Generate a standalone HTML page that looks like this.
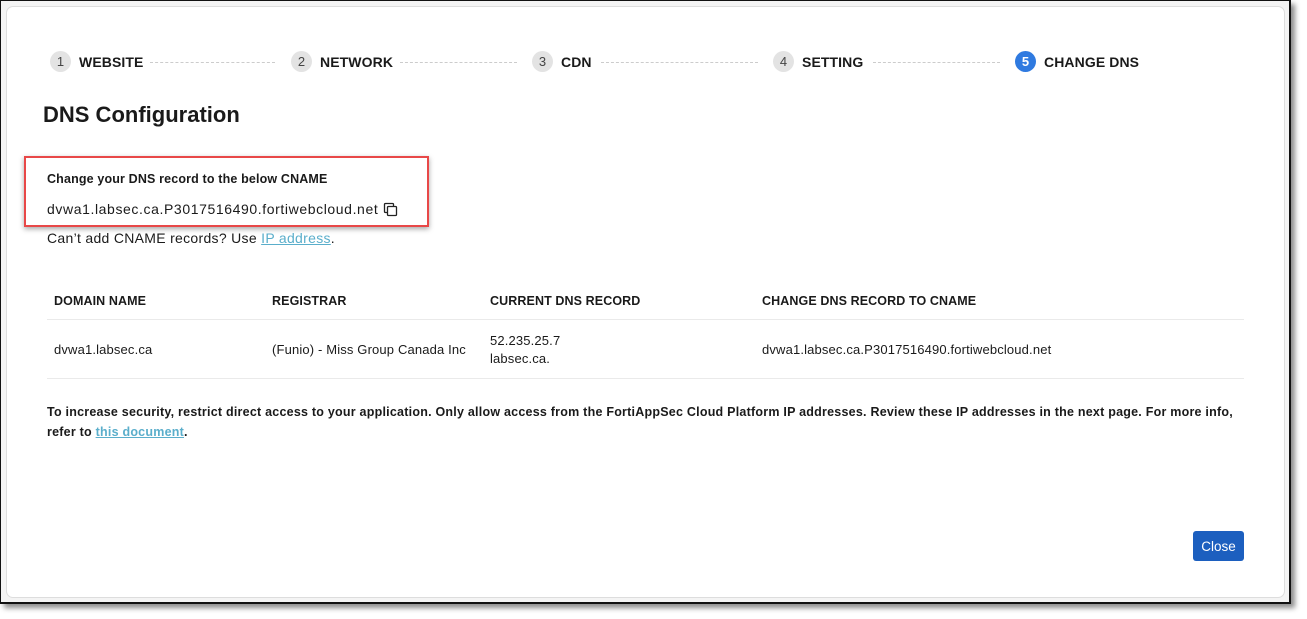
<!DOCTYPE html>
<html><head><style>
*{margin:0;padding:0;box-sizing:border-box}
body{width:1307px;height:619px;background:#fff;position:relative;overflow:hidden;font-family:"Liberation Sans",sans-serif;color:#1a1a1a}
.frame{position:absolute;left:0;top:0;width:1291px;height:604px;border:1px solid #111;border-right:2px solid #111;border-bottom:2px solid #111;box-shadow:4px 4px 5px rgba(0,0,0,.45);background:#f4f4f4}
.card{position:absolute;left:6px;top:6px;width:1279px;height:592px;background:#fff;border:1px solid #ddd;border-radius:7px}
.abs{position:absolute;white-space:nowrap}
.step{position:absolute;top:51px;display:flex;align-items:center;font-weight:bold;font-size:14px;letter-spacing:.1px}
.num{width:21px;height:21px;border-radius:50%;background:#e3e3e3;color:#444;font-size:13px;font-weight:normal;display:flex;align-items:center;justify-content:center;margin-right:8px}
.num.a{background:#2f7ae0;color:#fff;font-weight:bold}
.dash{position:absolute;top:62px;border-top:1px dashed #ccc}
.th{position:absolute;top:294px;font-size:12.5px;font-weight:bold;letter-spacing:.1px}
.td{position:absolute;font-size:13px;letter-spacing:.15px}
.link{color:#5aaecb;text-decoration:underline}
</style></head><body>
<div class="frame"></div>
<div class="card"></div>
<div class="step" style="left:50px"><span class="num">1</span>WEBSITE</div>
<div class="dash" style="left:150px;width:125px"></div>
<div class="step" style="left:291px"><span class="num">2</span>NETWORK</div>
<div class="dash" style="left:400px;width:117px"></div>
<div class="step" style="left:532px"><span class="num">3</span>CDN</div>
<div class="dash" style="left:601px;width:157px"></div>
<div class="step" style="left:773px"><span class="num">4</span>SETTING</div>
<div class="dash" style="left:873px;width:127px"></div>
<div class="step" style="left:1015px"><span class="num a">5</span>CHANGE DNS</div>
<div class="abs" style="left:43px;top:102px;font-size:22px;font-weight:bold">DNS Configuration</div>
<div class="abs" style="left:24px;top:156px;width:405px;height:71px;border:2px solid #e84848;box-shadow:0 2px 5px rgba(0,0,0,.35)"></div>
<div class="abs" style="left:47px;top:172px;font-size:12.5px;font-weight:bold;letter-spacing:.15px">Change your DNS record to the below CNAME</div>
<div class="abs" style="left:47px;top:201px;font-size:14px;letter-spacing:.6px">dvwa1.labsec.ca.P3017516490.fortiwebcloud.net</div>
<svg class="abs" style="left:383px;top:202px" width="16" height="16" viewBox="0 0 16 16"><rect x="1.5" y="1.5" width="9" height="9" rx="1" fill="none" stroke="#222" stroke-width="1.3"/><rect x="4.5" y="4.5" width="9" height="9" rx="1" fill="#fff" stroke="#222" stroke-width="1.3"/></svg>
<div class="abs" style="left:47px;top:230px;font-size:14px;letter-spacing:.3px">Can’t add CNAME records? Use <span class="link">IP address</span>.</div>
<div class="th" style="left:54px">DOMAIN NAME</div>
<div class="th" style="left:272px">REGISTRAR</div>
<div class="th" style="left:490px">CURRENT DNS RECORD</div>
<div class="th" style="left:762px">CHANGE DNS RECORD TO CNAME</div>
<div class="abs" style="left:47px;top:319px;width:1197px;border-top:1px solid #eaeaea"></div>
<div class="td" style="left:54px;top:342px">dvwa1.labsec.ca</div>
<div class="td" style="left:272px;top:342px">(Funio) - Miss Group Canada Inc</div>
<div class="td" style="left:490px;top:332px;line-height:18px">52.235.25.7<br>labsec.ca.</div>
<div class="td" style="left:762px;top:342px">dvwa1.labsec.ca.P3017516490.fortiwebcloud.net</div>
<div class="abs" style="left:47px;top:378px;width:1197px;border-top:1px solid #eaeaea"></div>
<div class="abs" style="left:47px;top:402px;font-size:12.5px;font-weight:bold;line-height:20px;letter-spacing:.23px">To increase security, restrict direct access to your application. Only allow access from the FortiAppSec Cloud Platform IP addresses. Review these IP addresses in the next page. For more info,<br>refer to <span class="link">this document</span>.</div>
<div class="abs" style="left:1193px;top:531px;width:51px;height:30px;background:#1c5fbf;border-radius:3px;color:#fff;font-size:13.5px;display:flex;align-items:center;justify-content:center">Close</div>
</body></html>
